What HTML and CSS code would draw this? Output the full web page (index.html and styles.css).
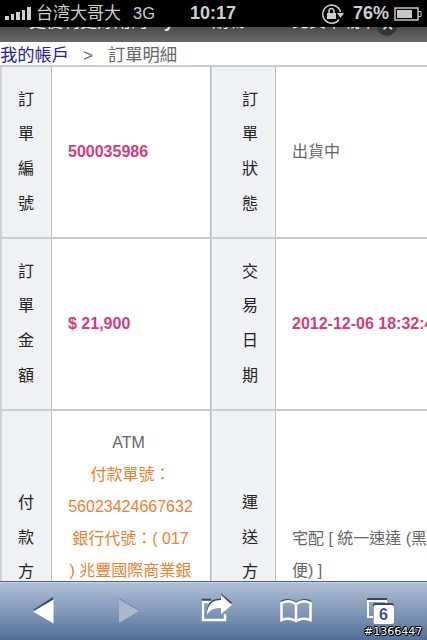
FILE: index.html
```html
<!DOCTYPE html>
<html lang="zh-Hant">
<head>
<meta charset="utf-8">
<title>訂單明細</title>
<link rel="stylesheet" href="styles.css">
</head>
<body>
<div class="phone">
  <header class="status">
    <div class="bars"><i></i><i></i><i></i><i></i><i></i></div>
    <span class="carrier">台湾大哥大</span>
    <span class="network">3G</span>
    <span class="clock">10:17</span>
    <svg class="lock" viewBox="0 0 24 22" width="24" height="22" fill="none" stroke="#cfcfcf" stroke-width="1.5">
      <path d="M18 16.500A9 9 0 1 1 19.500 9"/><path d="M16 10h7l-3.500 5z" fill="#cfcfcf" stroke="none"/>
      <path d="M6 10h9v6H6z" fill="#cfcfcf" stroke="none"/><path d="M8 10V8a2.500 2.500 0 0 1 5 0v2"/>
    </svg>
    <span class="percent">76%</span>
    <svg class="battery" viewBox="0 0 28 14" width="28" height="14">
      <path d="M1 1h23v12H1z" fill="none" stroke="#c8c8c8" stroke-width="1.5"/><path d="M3 3h15v8H3z" fill="#c8c8c8"/><path d="M24.5 4.5h2.5v5h-2.500" fill="none" stroke="#c8c8c8"/>
    </svg>
  </header>
  <div class="banner">
    <span class="banner-text">更便利更好用的<b>myfone</b>購物APP</span>
    <span class="banner-link">免費下載下</span>
    <span class="close">✕</span>
  </div>
  <nav class="crumbs"><a>我的帳戶</a><span class="sep">&gt;</span><span>訂單明細</span></nav>
  <main class="orders">
    <div class="label">訂<br>單<br>編<br>號</div>
    <div class="value strong">500035986</div>
    <div class="label second">訂<br>單<br>狀<br>態</div>
    <div class="value last">出貨中</div>
    <div class="label">訂<br>單<br>金<br>額</div>
    <div class="value strong">$ 21,900</div>
    <div class="label second">交<br>易<br>日<br>期</div>
    <div class="value strong last">2012-12-06 18:32:45</div>
    <div class="label tall">付<br>款<br>方<br>式</div>
    <div class="value payment"><span class="method">ATM</span><span class="orange">付款單號：<br>56023424667632<br>銀行代號：( 017<br>) 兆豐國際商業銀</span></div>
    <div class="label second tall">運<br>送<br>方<br>式</div>
    <div class="value last delivery">宅配 [ 統一速達 (黑貓宅急<br>便) ]</div>
  </main>
  <footer class="toolbar">
    <svg viewBox="0 0 427 58" width="427" height="58">
      <path d="M33 28 53 15v25z" fill="#34486a"/><path d="M33 29.500 53.500 17.500v24z" fill="#fff"/>
      <path d="M119 17v24l20-12z" fill="#a9b8cd"/><path d="M119 16.500l20 12" stroke="#7489a8"/>
      <g fill="none" stroke="#34486a" stroke-width="2.500"><path d="M211 18h-8v18"/><path d="M281 20q8-4 15 1 8-5 15-1"/></g>
      <g fill="none" stroke="#fff" stroke-width="2.500"><path d="M211 20h-8v18h22v-6"/><path d="M281.500 21q8-4 14.500 1 7-5 14.500-1v17q-8-3-14.500 1-7-4-14.500-1zM296 22v16"/></g>
      <path d="M207 32c0-11 6-14 14-14v-5l11 9-11 9v-6c-6 0-11 1-14 7z" fill="#34486a" transform="translate(0 -1.500)"/>
      <path d="M207 33c0-11 6-15 14-15v-5l11 10-11 9v-6c-6 0-11 1-14 7z" fill="#fff"/>
      <path d="M368 20v-3h18v4" fill="none" stroke="#34486a" stroke-width="2"/><path d="M373 35h-5V19h18v5" fill="none" stroke="#fff" stroke-width="2"/>
      <rect x="373" y="21" width="21" height="19" rx="2" fill="#34486a"/><rect x="373.500" y="23" width="20.500" height="19" rx="2" fill="#fff"/>
      <text class="tabs-count" x="383.500" y="38" text-anchor="middle">6</text>
    </svg>
    <span class="stamp">#1366447</span>
  </footer>
</div>
</body>
</html>
```
FILE: styles.css
```css
* { box-sizing: border-box; }
body { margin: 0; background: #fff; }
.phone {
  position: relative; width: 427px; height: 640px; overflow: hidden;
  display: flex; flex-direction: column;
  font-family: "Liberation Sans", "Noto Sans CJK TC", sans-serif; color: #666;
}
.status {
  height: 27px; flex: none; display: flex; align-items: center;
  background: #000; color: #cfcfcf; font-size: 17px; line-height: 27px; white-space: nowrap;
}
.bars { display: flex; align-items: flex-end; gap: 2px; width: 26px; height: 13px; margin-left: 5px; }
.bars i { width: 3.500px; height: 4px; background: #cfcfcf; }
.bars i:nth-child(2) { height: 6px; }
.bars i:nth-child(3) { height: 8px; }
.bars i:nth-child(4) { height: 10px; }
.bars i:nth-child(5) { height: 13px; }
.carrier { margin-left: 5px; width: 97px; }
.network { width: 57px; font-size: 16.500px; }
.clock { width: 131px; font-weight: bold; font-size: 18px; }
.lock { flex: none; }
.percent { margin-left: 8px; width: 41px; font-size: 18px; font-weight: bold; }
.battery { flex: none; }
.banner {
  height: 15px; flex: none; position: relative; overflow: hidden; display: flex; align-items: flex-end;
  background: linear-gradient(#4b4b4b, #686868); color: #eee; font-size: 17px; line-height: 20px;
  padding: 0 0 10px 29px; white-space: nowrap;
}
.banner-text { width: 263px; }
.banner b { font-size: 18px; }
.close {
  position: absolute; left: 377px; top: -11px; width: 20px; height: 20px; border-radius: 50%;
  background: #363636; text-align: center; font-size: 16px; line-height: 20px;
}
.crumbs { height: 23px; flex: none; display: flex; font-size: 17.300px; line-height: 26px; }
.crumbs a { color: #2520a0; width: 83px; }
.sep { width: 25px; }
.orders {
  flex: none; display: grid; grid-template-columns: 52px 159px 65px 200px;
  grid-template-rows: 172px 172px 260px; border-top: 2px solid #ccc; width: 476px;
}
.label, .value { border-bottom: 2px solid #ccc; border-right: 1px solid #bbbcc2; display: flex; align-items: center; }
.label {
  background: #f0f1f5; border-left: 2px solid #d0d1d5; color: #222; padding-left: 16px;
  font-size: 16px; line-height: 34.700px;
}
.label.second { padding-left: 30px; border-left-width: 1px; border-left-color: #d0d1d5; }
.value { padding-left: 16px; font-size: 16px; line-height: 32px; white-space: nowrap; }
.strong { font-weight: bold; color: #d63b7c; }
.label.tall { align-items: flex-start; padding-top: 75px; }
.payment { flex-direction: column; padding: 16px 16px 0 15px; text-align: center; }
.method { margin-right: 4px; }
.orange { color: #e9822f; }
.delivery { align-items: flex-start; padding-top: 112px; }
.toolbar {
  position: absolute; left: 0; top: 581px; width: 427px; height: 59px;
  border-top: 1px solid #4f6380; box-shadow: inset 0 1px #c8d4e4;
  background: linear-gradient(#b0c0d7, #8299b9 50%, #536f98);
}
.toolbar svg { display: block; }
.tabs-count { font-size: 16px; font-weight: bold; fill: #465777; }
.stamp {
  position: absolute; left: 364px; top: 42px; color: #fff; font: 11px/16px "DejaVu Sans", sans-serif;
  text-shadow: 1px 0 #000, -1px 0 #000, 0 1px #000, 0 -1px #000, 1px 1px #000, -1px -1px #000;
}
```
